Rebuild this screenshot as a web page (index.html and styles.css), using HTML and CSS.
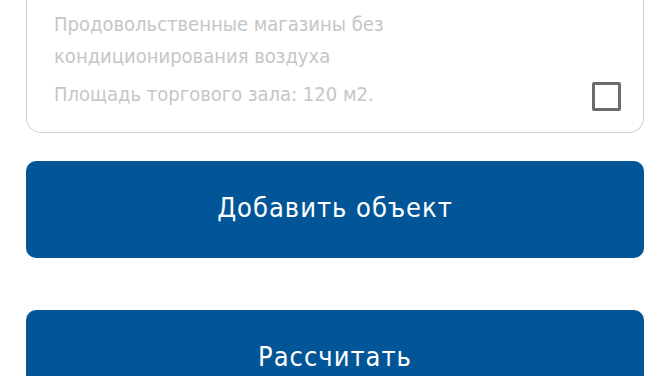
FILE: index.html
```html
<!DOCTYPE html>
<html lang="ru">
<head>
<meta charset="utf-8">
<link rel="stylesheet" href="styles.css">
</head>
<body>
<div class="page">
  <div class="card">
    <div class="title">Продовольственные магазины без<br>кондиционирования воздуха</div>
    <div class="row">
      <div class="area">Площадь торгового зала: 120 м2.</div>
      <div class="checkbox"></div>
    </div>
  </div>
  <button class="btn btn-add">Добавить объект</button>
  <button class="btn btn-calc">Рассчитать</button>
</div>
</body>
</html>
```
FILE: styles.css
```css
html, body {
  margin: 0;
  padding: 0;
  background: #ffffff;
  overflow: hidden;
}
.page {
  display: flex;
  flex-direction: column;
  padding: 0 26px;
  font-family: "DejaVu Sans Condensed", "DejaVu Sans", sans-serif;
}
.card {
  border: 1.5px solid #cfcfcf;
  border-top: 0;
  border-radius: 0 0 15px 15px;
  padding: 8px 22px 22px 27px;
  display: flex;
  flex-direction: column;
}
.title {
  font-size: 20px;
  line-height: 32px;
  color: #c6c6c6;
}
.row {
  display: flex;
  justify-content: space-between;
  align-items: flex-end;
  margin-top: 6px;
}
.area {
  font-size: 20px;
  line-height: 32px;
  color: #c6c6c6;
}
.checkbox {
  width: 23px;
  height: 23px;
  border: 3px solid #6b6b6b;
  border-radius: 2px;
  margin-bottom: -1px;
}
.btn {
  display: block;
  width: 100%;
  height: 97px;
  border: 0;
  border-radius: 10px;
  background: #025698;
  color: #ffffff;
  font-family: inherit;
  font-size: 27px;
  letter-spacing: 1px;
  padding: 0 0 4px;
}
.btn-add {
  margin-top: 28px;
}
.btn-calc {
  margin-top: 52px;
}
```
